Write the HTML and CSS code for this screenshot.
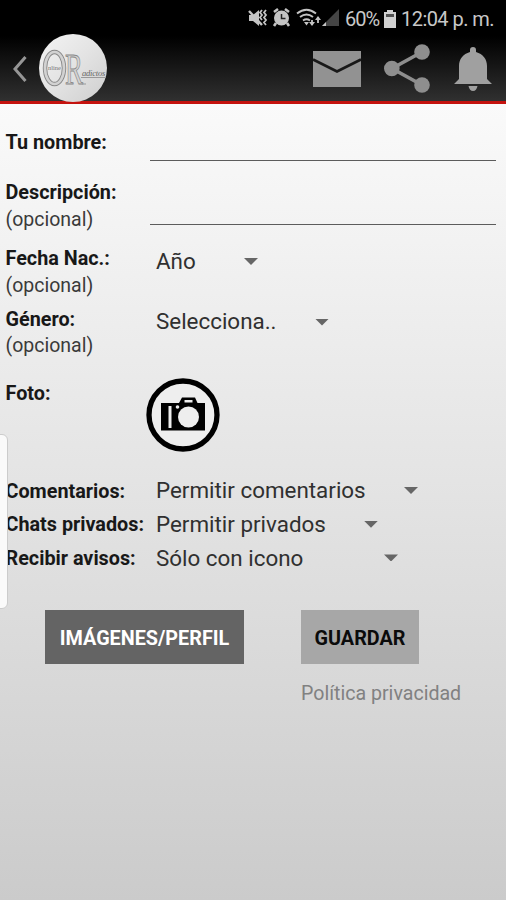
FILE: index.html
```html
<!DOCTYPE html>
<html lang="es">
<head>
<meta charset="utf-8">
<title>Perfil</title>
<link rel="stylesheet" href="styles.css">
</head>
<body>
<div class="screen">
  <header class="top">
    <div class="status">
      <svg class="status-icons" width="92" height="22" viewBox="0 0 92 22">
        <g fill="#c4c4c4">
          <path d="M1 8h4l6-5v16l-6-5H1z"/>
          <path d="M1 4l13 14" stroke="#c4c4c4" stroke-width="2.4"/>
          <path d="M14 3l-2 2.5 2 2.5-2 2.5 2 2.5M18 3l-2 2.5 2 2.5-2 2.5 2 2.5-2 2.5 2 2.5" fill="none" stroke="#c4c4c4" stroke-width="1.8"/>
          <circle cx="33.500" cy="11" r="7.500"/>
          <path d="M26 5l4-3M41 5l-4-3M28 16l-2 3M39 16l2 3" stroke="#c4c4c4" stroke-width="2.600"/>
          <path d="M33.500 7v4.500h4" fill="none" stroke="#222" stroke-width="1.500"/>
        </g>
        <g fill="none" stroke="#c4c4c4" stroke-width="1.900">
          <path d="M49 6.500q9.500-7.500 19 0M52 10q6.500-5 13 0M55 13.500q3.500-2.500 7 0"/>
          <path d="M64 18v-5M70 10v6" stroke-width="1.800"/>
        </g>
        <path d="M56 15h5l-2.500 3.500zM61 15h6l-3 4zM67 13l3-4 3 4z" fill="#c4c4c4"/>
        <path d="M74 19L91 2v17z" fill="#454545"/>
        <path d="M74 19l4-4v4z" fill="#c4c4c4"/>
      </svg>
      <span class="percent">60%</span>
      <svg class="battery" width="12" height="18" viewBox="0 0 12 18">
        <path d="M3 0h6v2h3v16H0V2h3z" fill="#d0d0d0"/>
        <path d="M2 4h8v3H2z" fill="#505050"/>
      </svg>
      <span class="clock">12:04 p. m.</span>
    </div>
    <nav class="bar">
      <svg class="back" width="16" height="28" viewBox="0 0 16 28"><path d="M14.500 2L4 14l10.500 12" fill="none" stroke="#969696" stroke-width="3"/></svg>
      <svg class="logo" width="70" height="70" viewBox="0 0 70 70">
        <defs><linearGradient id="disc" x1="0" y1="0" x2="1" y2="1"><stop offset="0" stop-color="#f4f4f4"/><stop offset=".5" stop-color="#e3e3e3"/><stop offset="1" stop-color="#cecece"/></linearGradient></defs>
        <circle cx="35" cy="35" r="34" fill="url(#disc)"/>
        <ellipse cx="16.500" cy="35" rx="9.500" ry="16" fill="none" stroke="#888" stroke-width="4.400"/>
        <ellipse cx="16.500" cy="35" rx="9.500" ry="16" fill="none" stroke="#d2d2d2" stroke-width="2.600"/>
        <text class="monogram" x="27" y="51" textLength="18" lengthAdjust="spacingAndGlyphs">R</text>
        <text class="logo-small" x="10" y="37" textLength="13" lengthAdjust="spacingAndGlyphs">nline</text>
        <text class="logo-word" x="44" y="43">adictos</text>
        <path d="M43 44.500h25M44 51h4" stroke="#999"/>
      </svg>
      <div class="actions">
        <svg width="48" height="36" viewBox="0 0 48 36"><path d="M0 0h48v36H0z" fill="#929292"/><path d="M0 8.500l24 12 24-12" fill="none" stroke="#181818" stroke-width="2.800"/></svg>
        <svg width="48" height="50" viewBox="0 0 48 50"><path d="M38 8L8 24.500 38 41" fill="none" stroke="#8e8e8e" stroke-width="3.600"/><g fill="#8e8e8e"><circle cx="38" cy="8" r="7.800"/><circle cx="7.800" cy="24.500" r="7.800"/><circle cx="38" cy="41" r="7.800"/></g></svg>
        <svg width="38" height="44" viewBox="0 0 38 44"><g fill="#a0a0a0"><path d="M16 5V3a3 3 0 0 1 6 0v2c7 2 11 7 11 14v13l5 5H0l5-5V19C5 12 9 7 16 5z"/><path d="M14.500 39h9q-1 5-4.500 5t-4.500-5z"/></g></svg>
      </div>
    </nav>
  </header>

  <main>
    <div class="row name">
      <div class="label"><b>Tu nombre:</b></div>
      <div class="field"></div>
    </div>
    <div class="row description">
      <div class="label"><b>Descripción:</b><span>(opcional)</span></div>
      <div class="field"></div>
    </div>
    <div class="row birth">
      <div class="label"><b>Fecha Nac.:</b><span>(opcional)</span></div>
      <div class="select year"><span>Año</span><i class="caret"></i></div>
    </div>
    <div class="row gender">
      <div class="label"><b>Género:</b><span>(opcional)</span></div>
      <div class="select sex"><span>Selecciona..</span><i class="caret"></i></div>
    </div>
    <div class="row photo">
      <div class="label"><b>Foto:</b></div>
      <svg class="camera" width="74" height="74" viewBox="0 0 74 74">
        <circle cx="37" cy="37" r="34" fill="#eee" stroke="#000" stroke-width="5.300"/>
        <path d="M15 25h18l3-5.500h13l2.500 5.500H59v27.500H15z" fill="#000"/>
        <path d="M38.500 22h8v2.500h-8z" fill="#eee"/>
        <path d="M22.500 28h3v22h-3z" fill="#eee"/>
        <circle cx="31.500" cy="29" r="1.800" fill="#eee"/>
        <circle cx="42.500" cy="39" r="10.500" fill="#eee"/>
      </svg>
    </div>
    <div class="row option">
      <div class="label"><b>Comentarios:</b></div>
      <div class="select comments"><span>Permitir comentarios</span><i class="caret"></i></div>
    </div>
    <div class="row option">
      <div class="label"><b>Chats privados:</b></div>
      <div class="select chats"><span>Permitir privados</span><i class="caret"></i></div>
    </div>
    <div class="row option">
      <div class="label"><b>Recibir avisos:</b></div>
      <div class="select alerts"><span>Sólo con icono</span><i class="caret"></i></div>
    </div>
    <div class="buttons">
      <button class="btn dark">IMÁGENES/PERFIL</button>
      <div class="save">
        <button class="btn light">GUARDAR</button>
        <a class="privacy">Política privacidad</a>
      </div>
    </div>
  </main>
  <div class="edge-handle"></div>
</div>
</body>
</html>
```

FILE: styles.css
```css
* { box-sizing: border-box; }
body { margin: 0; font-family: Roboto, "Liberation Sans", sans-serif; }
.screen {
  position: relative;
  width: 506px;
  height: 900px;
  overflow: hidden;
  background: linear-gradient(#fafafa 104px, #e4e4e4 480px, #cbcbcb 900px);
}
.top {
  height: 104px;
  background: linear-gradient(#000 36px, #303030 101px);
  border-bottom: 3px solid #c4120e;
}
.status {
  height: 38px;
  display: flex;
  align-items: center;
  padding: 0 0 0 248px;
  color: #c8c8c8;
  font-size: 20px;
  white-space: nowrap;
}
.status-icons, .battery { flex: none; }
.status-icons { margin-top: -2px; }
.percent { width: 34px; margin-left: 5px; letter-spacing: -1px; }
.battery { margin: -1px 5px 0 5px; }
.clock { letter-spacing: -0.55px; }
.bar { height: 65px; margin-top: -2px; display: flex; align-items: center; padding: 0 14px 0 11px; }
.logo { margin: -2px 0 0 11px; }
.monogram { font: 45px "Liberation Serif", serif; fill: #d4d4d4; stroke: #888; stroke-width: 0.9px; }
.logo-small { font: 6px "Liberation Serif", serif; fill: #777; }
.logo-word { font: italic 8.5px "Liberation Serif", serif; letter-spacing: -0.2px; fill: #666; }
.actions { margin-left: auto; display: flex; align-items: center; gap: 22.5px; }
main { padding-top: 25px; }
.row { display: grid; grid-template-columns: 150px 1fr; align-items: start; }
.label { padding: 1px 0 0 5.5px; display: flex; flex-direction: column; color: #3a3a3a; font-size: 19.5px; line-height: 26.5px; white-space: nowrap; }
.label b { font-size: 19.8px; font-weight: 700; color: #181818; }
.name { height: 50px; }
.description { height: 66px; }
.field { margin-right: 10px; border-bottom: 1.5px solid #5c5c5c; }
.name .field { height: 32px; }
.description .field { height: 46px; }
.birth { height: 60.5px; }
.gender { height: 74.5px; }
.photo { height: 94px; }
.camera { margin: -2px 0 0 -4px; }
.option { height: 33.7px; }
.option .label { padding-top: 0.7px; line-height: 33px; }
.select { margin-left: 6px; display: flex; align-items: center; justify-content: space-between; height: 33px; color: #303030; font-size: 22.4px; white-space: nowrap; }
.year span, .sex span, .comments span { margin-top: -1.5px; }
.caret { width: 14px; height: 7px; background: #666; clip-path: polygon(0 0, 100% 0, 50% 100%); }
.year { width: 102px; }
.sex { width: 173px; }
.comments { width: 262px; }
.chats { width: 222px; }
.alerts { width: 242px; }
.buttons { display: flex; gap: 57px; padding: 34.5px 0 0 45px; align-items: flex-start; }
.btn { display: block; height: 54px; border: 0; padding: 3px 0 0; font: 700 19.8px Roboto, sans-serif; }
.dark { width: 199px; background: #646464; color: #fff; }
.light { width: 118px; background: #a7a7a7; color: #0b0b0b; }
.privacy { display: block; margin-top: 17px; color: #818181; font-size: 19.6px; line-height: 26px; white-space: nowrap; }
.edge-handle { position: absolute; left: -6px; top: 434px; width: 14px; height: 175px; border: 1px solid #ccc; border-radius: 6px; background: #fafafa; }
```
